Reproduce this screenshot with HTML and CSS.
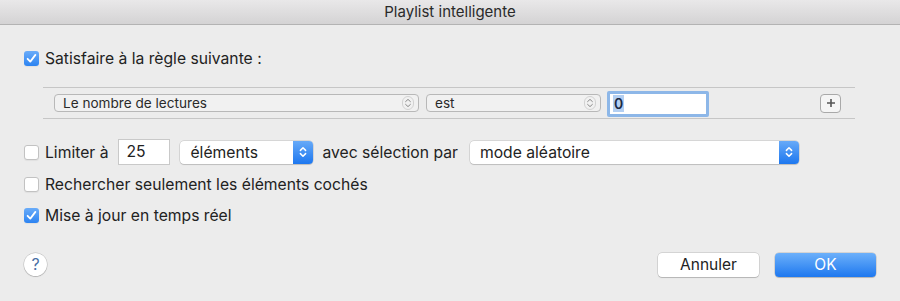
FILE: index.html
```html
<!DOCTYPE html>
<html>
<head>
    <meta charset="utf-8">
    <title>Playlist intelligente</title>
    <link rel="stylesheet" href="styles.css">
</head>
<body>
    <div class="titlebar">Playlist intelligente</div>

    <div class="main">
        <div class="check-row first">
            <span class="box checked">
                <svg viewBox="0 0 15 15"><path d="M3.6 7.8 L6.3 10.6 L11.4 3.9" /></svg>
            </span>
            <span class="label">Satisfaire à la règle suivante :</span>
        </div>

        <div class="rule">
            <div class="popup field">
                <span>Le nombre de lectures</span>
                <svg class="arrows" viewBox="0 0 12 14"><rect x="0.5" y="0.5" width="11" height="13" rx="5.5" /><path d="M3.6 5.6 L6 3.4 L8.4 5.6 M3.6 8.4 L6 10.6 L8.4 8.4" /></svg>
            </div>
            <div class="popup op">
                <span>est</span>
                <svg class="arrows" viewBox="0 0 12 14"><rect x="0.5" y="0.5" width="11" height="13" rx="5.5" /><path d="M3.6 5.6 L6 3.4 L8.4 5.6 M3.6 8.4 L6 10.6 L8.4 8.4" /></svg>
            </div>
            <div class="value">
                <span class="sel">0</span>
            </div>
            <div class="plus">
                <svg viewBox="0 0 10 10"><path d="M5 1 V9 M1 5 H9" /></svg>
            </div>
        </div>

        <div class="limit-row">
            <span class="box"></span>
            <span class="label">Limiter à</span>
            <div class="num">25</div>
            <div class="select items">
                <span>éléments</span>
                <span class="stepper"><svg viewBox="0 0 10 14"><path d="M2.4 5.4 L5 2.8 L7.6 5.4 M2.4 8.6 L5 11.2 L7.6 8.6" /></svg></span>
            </div>
            <span class="label by">avec sélection par</span>
            <div class="select mode">
                <span>mode aléatoire</span>
                <span class="stepper"><svg viewBox="0 0 10 14"><path d="M2.4 5.4 L5 2.8 L7.6 5.4 M2.4 8.6 L5 11.2 L7.6 8.6" /></svg></span>
            </div>
        </div>

        <div class="check-row second">
            <span class="box"></span>
            <span class="label">Rechercher seulement les éléments cochés</span>
        </div>

        <div class="check-row third">
            <span class="box checked">
                <svg viewBox="0 0 15 15"><path d="M3.6 7.8 L6.3 10.6 L11.4 3.9" /></svg>
            </span>
            <span class="label">Mise à jour en temps réel</span>
        </div>

        <div class="footer">
            <div class="help">?</div>
            <div class="buttons">
                <button class="btn">Annuler</button>
                <button class="btn primary">OK</button>
            </div>
        </div>
    </div>
</body>
</html>
```

FILE: styles.css
```css
* {
    margin: 0;
    padding: 0;
    box-sizing: border-box;
}
body {
    width: 900px;
    height: 301px;
    overflow: hidden;
    background: #ececec;
    font-family: Inter, "Liberation Sans", Arial, sans-serif;
    color: #222;
}
.titlebar {
    height: 25px;
    line-height: 24px;
    text-align: center;
    font-size: 15px;
    color: #2a2a2a;
    background: linear-gradient(#e9e8e9, #d4d3d4);
    border-bottom: 1px solid #b3b3b3;
}
.main {
    padding: 0 24px;
}
.check-row {
    display: flex;
    align-items: center;
    height: 16px;
}
.check-row.first {
    margin-top: 25px;
}
.check-row.second {
    margin-top: 11px;
}
.check-row.third {
    margin-top: 15px;
}
.box {
    width: 15px;
    height: 15px;
    flex: none;
    border-radius: 3px;
    background: #fff;
    border: 1px solid #c2c2c2;
    box-shadow: 0 1px 1px rgba(0, 0, 0, 0.05);
    display: flex;
}
.box.checked {
    border: 0;
    background: linear-gradient(#6aacf9, #2c83f1);
}
.box svg {
    width: 15px;
    height: 15px;
    fill: none;
    stroke: #fff;
    stroke-width: 1.8;
    stroke-linecap: round;
    stroke-linejoin: round;
}
.label {
    font-size: 15.7px;
    margin-left: 6px;
    color: #222;
    white-space: nowrap;
}
.rule {
    margin: 21px 0 0 19px;
    width: 812px;
    height: 32px;
    border-top: 1px solid #c6c6c6;
    border-bottom: 1px solid #c6c6c6;
    display: flex;
    align-items: center;
    padding-left: 11px;
}
.popup {
    height: 18px;
    border: 1px solid #b8b8b8;
    border-radius: 4px;
    background: #f1f1f1;
    display: flex;
    align-items: center;
    justify-content: space-between;
    padding: 0 4px 0 8px;
    font-size: 13.6px;
    color: #2a2a2a;
}
.popup.field {
    width: 365px;
    margin-right: 7px;
}
.popup.op {
    width: 175px;
    margin-right: 6px;
}
.arrows {
    width: 12px;
    height: 14px;
    fill: none;
    stroke-width: 1;
}
.arrows rect {
    stroke: #d2d2d2;
}
.arrows path {
    stroke: #8a8a8a;
    stroke-linecap: round;
    stroke-linejoin: round;
}
.value {
    width: 102px;
    height: 26px;
    border: 3px solid #8db7e8;
    border-radius: 2px;
    background: #fff;
    display: flex;
    align-items: center;
    padding-left: 3px;
    margin-top: 1px;
}
.sel {
    background: #b3cff2;
    color: #1a2a44;
    font-size: 14px;
    font-weight: 600;
    line-height: 17px;
    padding: 0 1px;
}
.plus {
    margin-left: auto;
    margin-right: 14px;
    width: 21px;
    height: 19px;
    border: 1px solid #a9a9a9;
    border-radius: 4px;
    background: #f5f5f5;
    display: flex;
    align-items: center;
    justify-content: center;
}
.plus svg {
    width: 10px;
    height: 10px;
    stroke: #555;
    stroke-width: 1.6;
}
.limit-row {
    display: flex;
    align-items: center;
    height: 26px;
    margin-top: 20px;
}
.num {
    width: 52px;
    height: 26px;
    margin-left: 10px;
    background: #fff;
    border: 1px solid #c9c9c9;
    font-size: 15.7px;
    line-height: 24px;
    padding-left: 7px;
}
.select {
    height: 23px;
    background: #fff;
    border-radius: 4px;
    box-shadow: 0 0 0 0.5px rgba(0, 0, 0, 0.18), 0 1px 1px rgba(0, 0, 0, 0.12);
    display: flex;
    align-items: center;
    justify-content: space-between;
    padding-left: 10px;
    font-size: 15.7px;
    color: #222;
    overflow: hidden;
}
.select.items {
    width: 133px;
    margin-left: 10px;
}
.select.mode {
    width: 329px;
    margin-left: 12px;
}
.label.by {
    margin-left: 9px;
}
.stepper {
    width: 20px;
    height: 23px;
    background: linear-gradient(#67aaf8, #1d77ef);
    display: flex;
    align-items: center;
    justify-content: center;
}
.stepper svg {
    width: 10px;
    height: 14px;
    fill: none;
    stroke: #fff;
    stroke-width: 1.5;
    stroke-linecap: round;
    stroke-linejoin: round;
}
.footer {
    display: flex;
    align-items: center;
    justify-content: space-between;
    margin-top: 29px;
    height: 25px;
}
.help {
    width: 23px;
    height: 23px;
    border-radius: 50%;
    background: #fff;
    box-shadow: 0 0 0 0.5px rgba(0, 0, 0, 0.2), 0 1px 1px rgba(0, 0, 0, 0.15);
    text-align: center;
    line-height: 23px;
    font-size: 16px;
    color: #4a6fa5;
}
.buttons {
    display: flex;
    gap: 16px;
}
.btn {
    width: 101px;
    height: 24px;
    border: 0;
    border-radius: 4px;
    background: #fff;
    box-shadow: 0 0 0 0.5px rgba(0, 0, 0, 0.2), 0 1px 1px rgba(0, 0, 0, 0.15);
    font-family: Inter, "Liberation Sans", Arial, sans-serif;
    font-size: 15.5px;
    color: #222;
}
.btn.primary {
    background: linear-gradient(#6cb0fa, #1e78ef);
    color: #fff;
}
```
